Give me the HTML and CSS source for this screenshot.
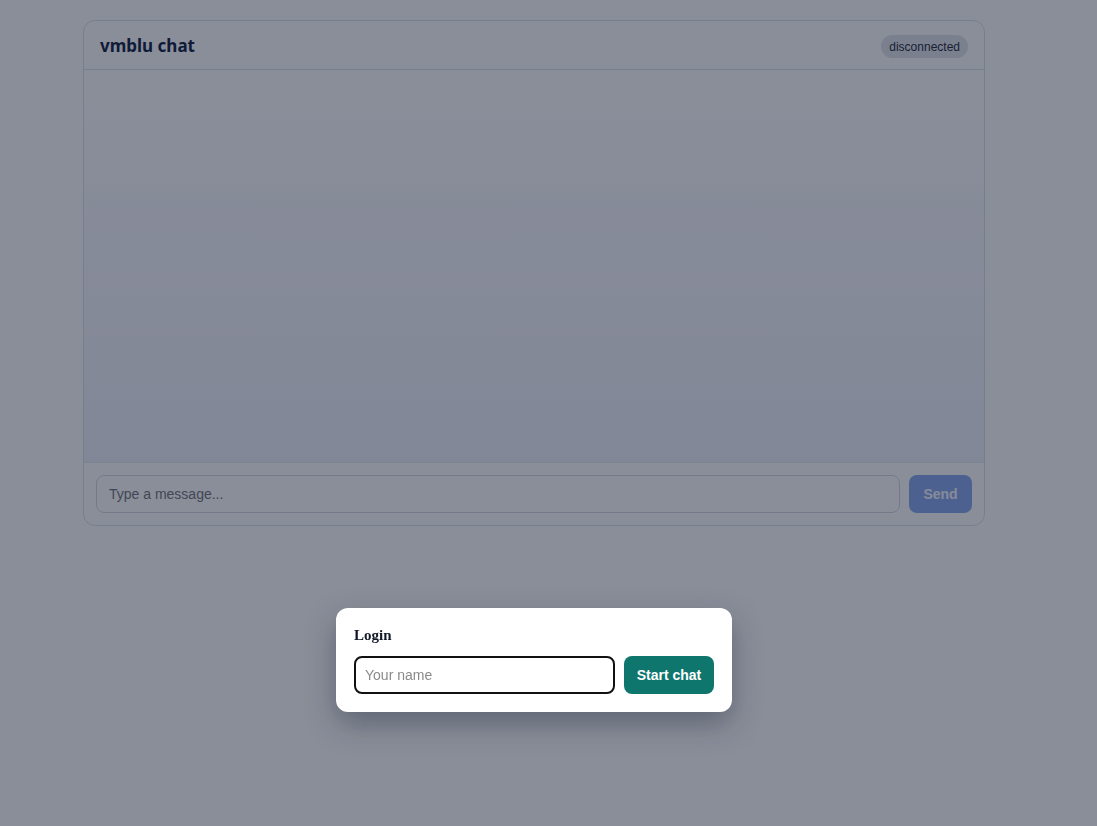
FILE: index.html
```html
<!DOCTYPE html>
<html lang="en">
<head>
  <meta charset="UTF-8">
  <meta name="viewport" content="width=device-width, initial-scale=1.0">
  <title>vmblu chat</title>
  <link rel="stylesheet" href="styles.css">
</head>
<body>
  <div class="app">
    <div class="chat">
      <div class="chat-header">
        <h1 class="chat-title">vmblu chat</h1>
        <span class="status">disconnected</span>
      </div>
      <div class="messages"></div>
      <form class="chat-footer">
        <input type="text" class="msg-input" placeholder="Type a message...">
        <button type="submit" class="send-btn" disabled>Send</button>
      </form>
    </div>
  </div>

  <div class="overlay">
    <div class="modal">
      <div class="modal-title">Login</div>
      <form class="login-row">
        <input type="text" class="name-input" placeholder="Your name" autofocus>
        <button type="submit" class="start-btn">Start chat</button>
      </form>
    </div>
  </div>
</body>
</html>
```

FILE: styles.css
```css
body {
  margin: 0;
  background-color: #eff1f4;
  font-family: "Liberation Sans", Arial, sans-serif;
  color: #0f172a;
}

.app {
  padding: 20px 0 0 83px;
}

.chat {
  width: 902px;
  box-sizing: border-box;
  border: 1px solid #cbd5e1;
  border-radius: 12px;
  overflow: hidden;
  background-color: #eff1f4;
}

.chat-header {
  height: 48px;
  padding: 0 16px;
  display: flex;
  justify-content: space-between;
  align-items: center;
  border-bottom: 1px solid #cbd5e1;
}

.chat-title {
  margin: 0;
  font-family: "Noto Sans", sans-serif;
  font-size: 17px;
  font-weight: 700;
  color: #0f1f45;
}

.status {
  font-family: "Liberation Sans", Arial, sans-serif;
  font-size: 12px;
  line-height: 14px;
  padding: 5px 8px 4px;
  margin-top: 2px;
  border-radius: 999px;
  background-color: #d3d8e2;
  color: #1e293b;
}

.messages {
  height: 392px;
  background: linear-gradient(to bottom, #eff1f4, #e0e4f3);
}

.chat-footer {
  display: flex;
  gap: 9px;
  padding: 12px;
  border-top: 1px solid #d6dce6;
}

.msg-input {
  flex: 1;
  height: 38px;
  box-sizing: border-box;
  padding: 0 12px;
  border: 1px solid #c4ccd9;
  border-radius: 8px;
  background: transparent;
  font-family: "Liberation Sans", Arial, sans-serif;
  font-size: 14px;
}

.msg-input::placeholder {
  color: #6b6f78;
}

.send-btn {
  width: 63px;
  height: 38px;
  border: none;
  border-radius: 8px;
  background-color: #809ee4;
  color: #e6ebf5;
  font-family: "Liberation Sans", Arial, sans-serif;
  font-size: 14px;
  font-weight: 700;
}

.overlay {
  position: fixed;
  inset: 0;
  background-color: rgba(15, 23, 42, 0.45);
}

.modal {
  position: absolute;
  left: 336px;
  top: 608px;
  width: 396px;
  box-sizing: border-box;
  padding: 18px;
  background-color: #fff;
  border-radius: 12px;
  box-shadow: 0 12px 30px rgba(15, 23, 42, 0.35);
}

.modal-title {
  font-family: "Liberation Serif", "Times New Roman", serif;
  font-size: 15px;
  font-weight: 700;
  color: #111827;
  margin-top: 1px;
  margin-bottom: 12px;
}

.login-row {
  display: flex;
  gap: 9px;
}

.name-input {
  width: 261px;
  height: 38px;
  box-sizing: border-box;
  padding: 0 9px;
  border: 2px solid #111;
  border-radius: 8px;
  outline: none;
  font-family: "Liberation Sans", Arial, sans-serif;
  font-size: 14px;
}

.name-input::placeholder {
  color: #8a8a8a;
}

.start-btn {
  width: 90px;
  height: 38px;
  border: none;
  border-radius: 8px;
  background-color: #0f766e;
  color: #fff;
  font-family: "Liberation Sans", Arial, sans-serif;
  font-size: 14px;
  font-weight: 700;
}
```
